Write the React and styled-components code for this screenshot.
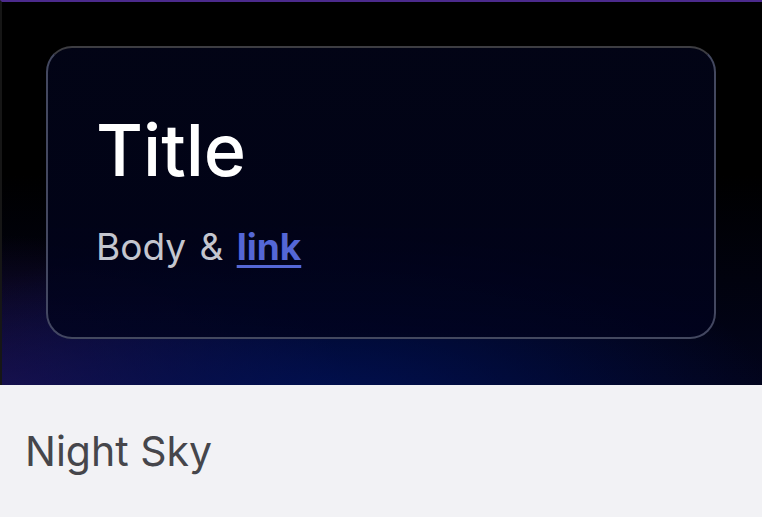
import React from "react";
import styled, { createGlobalStyle } from "styled-components";

const Global = createGlobalStyle`
  html, body { margin: 0; padding: 0; background: #f2f2f5; }
  body { font-family: Inter, "Noto Sans", sans-serif; }
  * { box-sizing: border-box; }
`;

const Page = styled.div`
  width: 762px;
  height: 517px;
  display: flex;
  flex-direction: column;
  background: #f2f2f5;
`;

const Preview = styled.div`
  height: 385px;
  padding: 44px 46px 46px 44px;
  border-top: 2px solid #4b2a8c;
  border-left: 2px solid #161616;
  background:
    radial-gradient(ellipse 460px 190px at 42% 108%, rgba(0, 18, 90, 0.9), rgba(0, 18, 90, 0) 100%),
    radial-gradient(ellipse 360px 180px at 0% 108%, rgba(40, 20, 90, 0.85), rgba(40, 20, 90, 0) 100%),
    linear-gradient(180deg, #000 0%, #000 45%, #02041c 100%);
  display: flex;
`;

const Card = styled.div`
  flex: 1;
  border: 2px solid rgba(90, 95, 120, 0.75);
  border-top-color: #3d3d42;
  border-radius: 26px;
  background: linear-gradient(180deg, rgba(2, 4, 22, 0.96), rgba(1, 3, 30, 0.8));
  padding: 59px 48px 40px;
  display: flex;
  flex-direction: column;
`;

const Title = styled.h1`
  margin: 0;
  font-family: Inter, sans-serif;
  font-size: 72px;
  font-weight: 500;
  line-height: 1.2;
  color: #ffffff;
`;

const Body = styled.p`
  margin: 26px 0 0;
  font-family: Inter, sans-serif;
  font-size: 37px;
  line-height: 1.5;
  word-spacing: 3px;
  color: #c4c6cf;
`;

const Link = styled.a`
  color: #5467d6;
  font-weight: 700;
  text-decoration: underline;
  text-decoration-thickness: 3px;
  text-underline-offset: 5px;
`;

const Caption = styled.div`
  flex: 1;
  display: flex;
  align-items: center;
  padding: 0 25px;
  font-family: Inter, sans-serif;
  font-size: 41px;
  color: #46464b;
`;

export default function App() {
  return (
    <Page>
      <Global />
      <Preview>
        <Card>
          <Title>Title</Title>
          <Body>
            Body &amp; <Link href="#">link</Link>
          </Body>
        </Card>
      </Preview>
      <Caption>Night Sky</Caption>
    </Page>
  );
}
